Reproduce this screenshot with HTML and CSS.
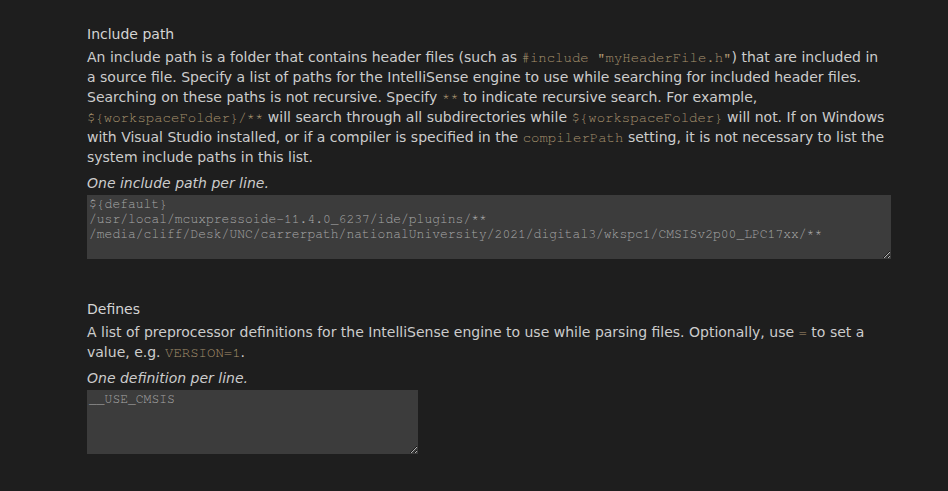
FILE: index.html
```html
<!DOCTYPE html>
<html>
<head>
<meta charset="utf-8">
<link rel="stylesheet" href="styles.css">
</head>
<body>
<div class="page">
  <section class="setting">
    <div class="title">Include path</div>
    <div class="desc">An include path is a folder that contains header files (such as <code>#include "myHeaderFile.h"</code>) that are included in a source file. Specify a list of paths for the IntelliSense engine to use while searching for included header files. Searching on these paths is not recursive. Specify <code>**</code> to indicate recursive search. For example, <code>${workspaceFolder}/**</code> will search through all subdirectories while <code>${workspaceFolder}</code> will not. If on Windows with Visual Studio installed, or if a compiler is specified in the <code>compilerPath</code> setting, it is not necessary to list the system include paths in this list.</div>
    <div class="hint">One include path per line.</div>
    <textarea class="box wide" spellcheck="false">${default}
/usr/local/mcuxpressoide-11.4.0_6237/ide/plugins/**
/media/cliff/Desk/UNC/carrerpath/nationalUniversity/2021/digital3/wkspc1/CMSISv2p00_LPC17xx/**</textarea>
  </section>
  <section class="setting second">
    <div class="title">Defines</div>
    <div class="desc">A list of preprocessor definitions for the IntelliSense engine to use while parsing files. Optionally, use <code>=</code> to set a value, e.g. <code>VERSION=1</code>.</div>
    <div class="hint">One definition per line.</div>
    <textarea class="box narrow" spellcheck="false">__USE_CMSIS</textarea>
  </section>
</div>
</body>
</html>
```
FILE: styles.css
```css
html, body {
  margin: 0;
  padding: 0;
  background: #1e1e1e;
}
.page {
  padding: 24px 0 0 87px;
  width: 804px;
  font-family: "DejaVu Sans", sans-serif;
  font-size: 14px;
  color: #cccccc;
}
.setting {
  display: flex;
  flex-direction: column;
  align-items: flex-start;
}
.second {
  margin-top: 40px;
}
.title {
  line-height: 20px;
  color: #d4d4d4;
}
.desc {
  margin-top: 3px;
  line-height: 20px;
  color: #cccccc;
}
code {
  font-family: "Nimbus Mono PS", "Nimbus Mono L", "FreeMono", "Courier", "Liberation Mono", monospace;
  font-size: 14px;
  line-height: 1;
  color: #a8936e;
}
.hint {
  margin-top: 6px;
  font-style: italic;
  line-height: 20px;
  color: #cccccc;
}
.box {
  margin-top: 2px;
  box-sizing: border-box;
  height: 64px;
  padding: 2px;
  border: none;
  outline: none;
  background: #3c3c3c;
  color: #a8a8a8;
  font-family: "Nimbus Mono PS", "Nimbus Mono L", "FreeMono", "Courier", "Liberation Mono", monospace;
  font-size: 13px;
  line-height: 15px;
  resize: vertical;
}
.wide { width: 804px; }
.narrow { width: 331px; }
```
